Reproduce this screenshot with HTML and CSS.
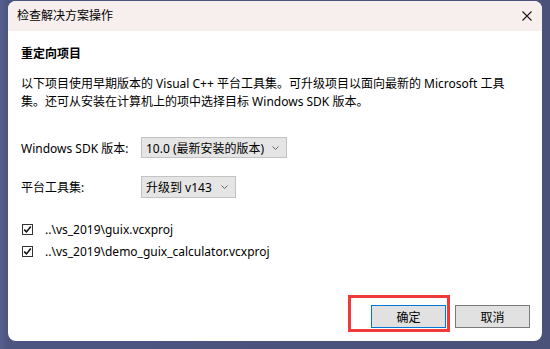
FILE: index.html
```html
<!DOCTYPE html>
<html>
<head>
    <title>检查解决方案操作</title>
    <link rel="stylesheet" href="styles.css">
</head>
<body>
    <div class="dialog">
        <div class="titlebar">
            <span class="title">检查解决方案操作</span>
            <svg class="close" width="10" height="10" viewBox="0 0 10 10">
                <path d="M0.5 0.5 L9.5 9.5 M9.5 0.5 L0.5 9.5" stroke="#1a1a1a" stroke-width="1.1" fill="none"/>
            </svg>
        </div>

        <div class="content">
            <h2>重定向项目</h2>
            <p class="desc">以下项目使用早期版本的 Visual C++ 平台工具集。可升级项目以面向最新的 Microsoft 工具<br>集。还可从安装在计算机上的项中选择目标 Windows SDK 版本。</p>

            <div class="field first">
                <label>Windows SDK 版本:</label>
                <div class="select sdk">
                    <span>10.0 (最新安装的版本)</span>
                    <svg width="7" height="4" viewBox="0 0 7 4"><path d="M0.5 0.5 L3.5 3.5 L6.5 0.5" stroke="#666" fill="none"/></svg>
                </div>
            </div>

            <div class="field">
                <label>平台工具集:</label>
                <div class="select toolset">
                    <span>升级到 v143</span>
                    <svg width="7" height="4" viewBox="0 0 7 4"><path d="M0.5 0.5 L3.5 3.5 L6.5 0.5" stroke="#666" fill="none"/></svg>
                </div>
            </div>

            <div class="projects">
                <div class="check-row">
                    <span class="box"><svg width="9" height="9" viewBox="0 0 9 9"><path d="M1.2 4.6 L3.5 6.9 L7.8 1.6" stroke="#111" stroke-width="1.6" fill="none"/></svg></span>
                    <span>..\vs_2019\guix.vcxproj</span>
                </div>
                <div class="check-row">
                    <span class="box"><svg width="9" height="9" viewBox="0 0 9 9"><path d="M1.2 4.6 L3.5 6.9 L7.8 1.6" stroke="#111" stroke-width="1.6" fill="none"/></svg></span>
                    <span>..\vs_2019\demo_guix_calculator.vcxproj</span>
                </div>
            </div>
        </div>

        <div class="buttons">
            <button class="btn primary">确定</button>
            <button class="btn">取消</button>
        </div>
    </div>
</body>
</html>
```

FILE: styles.css
```css
html, body {
    margin: 0;
    padding: 0;
}

body {
    width: 550px;
    height: 349px;
    background: linear-gradient(90deg, #56608c 0px, #4c5580 8px, #4a527a 100%);
    font-family: "Noto Sans", "Noto Sans CJK SC", sans-serif;
    font-size: 12px;
    color: #000;
    overflow: hidden;
    padding-top: 1px;
    box-sizing: border-box;
}

.dialog {
    margin-left: 8px;
    width: 534px;
    height: 340px;
    background-color: #fff;
    border-radius: 8px;
    overflow: hidden;
    display: flex;
    flex-direction: column;
}

.titlebar {
    height: 30px;
    background-color: #f6efed;
    display: flex;
    align-items: center;
    justify-content: space-between;
    padding: 0 10px 0 9px;
    flex-shrink: 0;
}

.title {
    line-height: 16px;
}

.content {
    padding: 15px 13px 0 13px;
}

h2 {
    margin: 0;
    font-size: 12px;
    font-weight: bold;
    line-height: 16px;
}

.desc {
    margin: 13px 0 0 0;
    line-height: 18px;
    white-space: nowrap;
}

.field {
    display: flex;
    align-items: center;
    margin-top: 18px;
}

.field.first {
    margin-top: 26px;
}

.field label {
    width: 120px;
}

.select {
    height: 21px;
    box-sizing: border-box;
    border: 1px solid #c3c3c3;
    background-color: #e5e5e5;
    display: flex;
    align-items: center;
    justify-content: space-between;
    padding: 0 7px 0 4px;
}

.select.sdk {
    width: 146px;
}

.select.toolset {
    width: 95px;
    height: 22px;
}

.projects {
    margin-top: 20px;
}

.check-row {
    display: flex;
    align-items: center;
    height: 22px;
}

.box {
    width: 11px;
    height: 11px;
    box-sizing: border-box;
    border: 1px solid #333;
    margin-left: 1px;
    margin-right: 12px;
    display: flex;
    align-items: center;
    justify-content: center;
}

.box svg {
    display: block;
}

.buttons {
    margin-top: auto;
    display: flex;
    justify-content: flex-end;
    gap: 9px;
    padding: 0 12px 13px 0;
}

.btn {
    width: 75px;
    height: 23px;
    box-sizing: border-box;
    border: 1px solid #7a7a7a;
    background-color: #e1e1e1;
    font-family: inherit;
    font-size: 12px;
    color: #000;
    padding: 0;
    position: relative;
}

.btn.primary {
    border-color: #0078d7;
}

/* red highlight drawn over the dialog */
.btn.primary::after {
    content: "";
    position: absolute;
    left: -24px;
    top: -11px;
    right: -5px;
    bottom: -5px;
    border: 3px solid #f03a3a;
}
```
